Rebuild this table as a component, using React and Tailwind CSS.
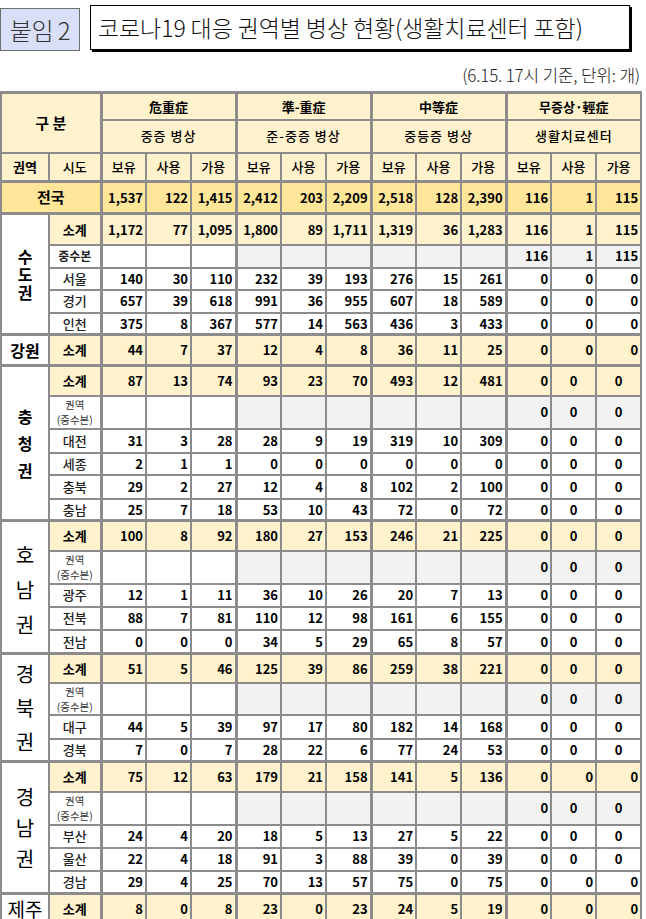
const groups = [
  { top: '危重症', sub: '중증 병상' },
  { top: '準-重症', sub: '준-중증 병상' },
  { top: '中等症', sub: '중등증 병상' },
  { top: '무증상·輕症', sub: '생활치료센터' },
];

const E = [null, null, null, null, null, null, null, null, null];

const regions = [
  {
    label: ['수', '도', '권'],
    labelCls: 'text-[16px] font-bold leading-[18px]',
    rows: [
      { sido: '소계', sub: true, h: 'h-[31px]', a: 'r', v: [1172, 77, 1095, 1800, 89, 1711, 1319, 36, 1283, 116, 1, 115] },
      { sido: '중수본', hub: true, h: 'h-[23px]', a: 'r', v: [...E, 116, 1, 115] },
      { sido: '서울', h: 'h-[22px]', a: 'r', v: [140, 30, 110, 232, 39, 193, 276, 15, 261, 0, 0, 0] },
      { sido: '경기', h: 'h-[23px]', a: 'r', v: [657, 39, 618, 991, 36, 955, 607, 18, 589, 0, 0, 0] },
      { sido: '인천', h: 'h-[22px]', a: 'r', v: [375, 8, 367, 577, 14, 563, 436, 3, 433, 0, 0, 0] },
    ],
  },
  {
    label: ['강원'],
    labelCls: 'text-[16px] font-bold',
    rows: [
      { sido: '소계', sub: true, h: 'h-[31px]', a: 'r', v: [44, 7, 37, 12, 4, 8, 36, 11, 25, 0, 0, 0] },
    ],
  },
  {
    label: ['충', '청', '권'],
    labelCls: 'text-[16px] font-bold leading-[27px]',
    rows: [
      { sido: '소계', sub: true, h: 'h-[30px]', a: 'c', v: [87, 13, 74, 93, 23, 70, 493, 12, 481, 0, 0, 0] },
      { sido: 'hub2', hub: true, h: 'h-[33px]', a: 'c', v: [...E, 0, 0, 0] },
      { sido: '대전', h: 'h-[24px]', a: 'c', v: [31, 3, 28, 28, 9, 19, 319, 10, 309, 0, 0, 0] },
      { sido: '세종', h: 'h-[22px]', a: 'c', v: [2, 1, 1, 0, 0, 0, 0, 0, 0, 0, 0, 0] },
      { sido: '충북', h: 'h-[24px]', a: 'c', v: [29, 2, 27, 12, 4, 8, 102, 2, 100, 0, 0, 0] },
      { sido: '충남', h: 'h-[22px]', a: 'c', v: [25, 7, 18, 53, 10, 43, 72, 0, 72, 0, 0, 0] },
    ],
  },
  {
    label: ['호', '남', '권'],
    labelCls: 'text-[20px] leading-[35px] pt-[4px]',
    rows: [
      { sido: '소계', sub: true, h: 'h-[30px]', a: 'c', v: [100, 8, 92, 180, 27, 153, 246, 21, 225, 0, 0, 0] },
      { sido: 'hub2', hub: true, h: 'h-[33px]', a: 'c', v: [...E, 0, 0, 0] },
      { sido: '광주', h: 'h-[23px]', a: 'c', v: [12, 1, 11, 36, 10, 26, 20, 7, 13, 0, 0, 0] },
      { sido: '전북', h: 'h-[23px]', a: 'c', v: [88, 7, 81, 110, 12, 98, 161, 6, 155, 0, 0, 0] },
      { sido: '전남', h: 'h-[24px]', a: 'c', v: [0, 0, 0, 34, 5, 29, 65, 8, 57, 0, 0, 0] },
    ],
  },
  {
    label: ['경', '북', '권'],
    labelCls: 'text-[20px] leading-[34px]',
    rows: [
      { sido: '소계', sub: true, h: 'h-[29px]', a: 'c', v: [51, 5, 46, 125, 39, 86, 259, 38, 221, 0, 0, 0] },
      { sido: 'hub2', hub: true, h: 'h-[32px]', a: 'c', v: [...E, 0, 0, 0] },
      { sido: '대구', h: 'h-[24px]', a: 'c', v: [44, 5, 39, 97, 17, 80, 182, 14, 168, 0, 0, 0] },
      { sido: '경북', h: 'h-[23px]', a: 'c', v: [7, 0, 7, 28, 22, 6, 77, 24, 53, 0, 0, 0] },
    ],
  },
  {
    label: ['경', '남', '권'],
    labelCls: 'text-[20px] leading-[31px]',
    rows: [
      { sido: '소계', sub: true, h: 'h-[30px]', a: 'r', v: [75, 12, 63, 179, 21, 158, 141, 5, 136, 0, 0, 0] },
      { sido: 'hub2', hub: true, h: 'h-[33px]', a: 'c', v: [...E, 0, 0, 0] },
      { sido: '부산', h: 'h-[23px]', a: 'c', v: [24, 4, 20, 18, 5, 13, 27, 5, 22, 0, 0, 0] },
      { sido: '울산', h: 'h-[23px]', a: 'c', v: [22, 4, 18, 91, 3, 88, 39, 0, 39, 0, 0, 0] },
      { sido: '경남', h: 'h-[23px]', a: 'r', v: [29, 4, 25, 70, 13, 57, 75, 0, 75, 0, 0, 0] },
    ],
  },
  {
    label: ['제주'],
    labelCls: 'text-[19px] leading-[22px]',
    rows: [
      { sido: '소계', sub: true, h: 'h-[30px]', a: 'r', v: [8, 0, 8, 23, 0, 23, 24, 5, 19, 0, 0, 0] },
    ],
  },
];

const fmt = (n) => (n === null ? '' : n.toLocaleString('en-US'));

function DataCells({ row, first }) {
  return row.v.map((n, i) => {
    let bg = 'bg-white';
    if (row.sub) bg = 'bg-[#fff2cc]';
    else if (row.hub && i >= 3) bg = 'bg-[#f2f2f2]';
    const center = row.a === 'c' && i >= 10;
    return (
      <td
        key={i}
        className={[
          'border-2 border-[#8c8c8c] px-[2px] py-0 text-[13px] font-bold',
          i % 3 === 0 ? 'border-l-[3px]' : '',
          first ? 'border-t-[3px]' : '',
          center ? 'text-center' : 'text-right',
          bg,
        ].join(' ')}
      >
        {fmt(n)}
      </td>
    );
  });
}

function SidoCell({ row, first }) {
  return (
    <td
      className={[
        'border-2 border-[#8c8c8c] p-0 text-center',
        first ? 'border-t-[3px]' : '',
        row.sub ? 'bg-[#fff2cc] text-[13px] font-bold' : 'bg-white text-[13px] font-medium text-[#222]',
      ].join(' ')}
    >
      {row.sido === 'hub2' ? (
        <div className="text-[10.5px] leading-[15px] font-normal text-[#333]">
          <div>권역</div>
          <div>(중수본)</div>
        </div>
      ) : row.sido === '중수본' ? (
        <span className="text-[12px] font-bold">중수본</span>
      ) : (
        row.sido
      )}
    </td>
  );
}

function Region({ region }) {
  return region.rows.map((row, idx) => (
    <tr key={idx} className={row.h}>
      {idx === 0 && (
        <td
          rowSpan={region.rows.length}
          className="border-2 border-t-[3px] border-[#8c8c8c] bg-white p-0 text-center align-middle text-black"
        >
          <div className={'flex flex-col items-center ' + region.labelCls}>
            {region.label.map((c, k) => (
              <span key={k}>{c}</span>
            ))}
          </div>
        </td>
      )}
      <SidoCell row={row} first={idx === 0} />
      <DataCells row={row} first={idx === 0} />
    </tr>
  ));
}

export default function App() {
  const th = 'border-2 border-[#8c8c8c] bg-[#fff2cc] text-center';
  return (
    <div className="w-[646px] min-h-[919px] overflow-hidden bg-white text-black font-['Noto_Sans_CJK_KR','Noto_Sans',sans-serif]">
      <div className="flex items-start h-[58px] pt-[5px]">
        <div className="mt-[3px] w-[80px] h-[43px] bg-[#d9dff7] border border-[#6f6f6f] flex items-center justify-center text-[24px] font-light text-[#333] tracking-[-0.5px]">
          붙임 2
        </div>
        <div className="ml-[10px] w-[540px] h-[45px] border border-black shadow-[2px_2px_0_#000] flex items-center pl-[7px] text-[23px] font-light text-[#111] tracking-[-0.1px]">
          코로나19 대응 권역별 병상 현황(생활치료센터 포함)
        </div>
      </div>
      <div className="h-[33px] flex items-center justify-end pr-[6px] text-[17px] font-light text-[#222] tracking-[-0.2px]">
        (6.15. 17시 기준, 단위: 개)
      </div>
      <table className="table-fixed border-collapse w-[640px]">
        <colgroup>
          <col className="w-[48px]" />
          <col className="w-[52px]" />
          {Array.from({ length: 12 }).map((_, i) => (
            <col key={i} className="w-[45px]" />
          ))}
        </colgroup>
        <thead>
          <tr className="h-[27px]">
            <th rowSpan={2} colSpan={2} className={th + ' border-t-[3px] text-[15px] font-bold'}>
              구 분
            </th>
            {groups.map((g) => (
              <th key={g.top} colSpan={3} className={th + ' border-t-[3px] border-l-[3px] text-[13px] font-bold'}>
                {g.top}
              </th>
            ))}
          </tr>
          <tr className="h-[33px]">
            {groups.map((g) => (
              <th key={g.sub} colSpan={3} className={th + ' border-l-[3px] text-[13px] font-medium tracking-[1px]'}>
                {g.sub}
              </th>
            ))}
          </tr>
          <tr className="h-[29px]">
            <th className={th + ' text-[13px] font-bold'}>권역</th>
            <th className={th + ' text-[13px] font-medium'}>시도</th>
            {groups.map((g) =>
              ['보유', '사용', '가용'].map((l, i) => (
                <th
                  key={g.top + l}
                  className={th + ' text-[13px] font-medium ' + (i === 0 ? 'border-l-[3px]' : '')}
                >
                  {l}
                </th>
              ))
            )}
          </tr>
        </thead>
        <tbody>
          <tr className="h-[32px]">
            <td colSpan={2} className="border-2 border-t-[3px] border-[#8c8c8c] bg-[#ffe699] text-center text-[15px] font-bold">
              전국
            </td>
            {[1537, 122, 1415, 2412, 203, 2209, 2518, 128, 2390, 116, 1, 115].map((n, i) => (
              <td
                key={i}
                className={
                  'border-2 border-t-[3px] border-[#8c8c8c] bg-[#ffe699] px-[2px] text-right text-[13px] font-bold ' +
                  (i % 3 === 0 ? 'border-l-[3px]' : '')
                }
              >
                {fmt(n)}
              </td>
            ))}
          </tr>
          {regions.map((r, k) => (
            <Region key={k} region={r} />
          ))}
        </tbody>
      </table>
    </div>
  );
}
